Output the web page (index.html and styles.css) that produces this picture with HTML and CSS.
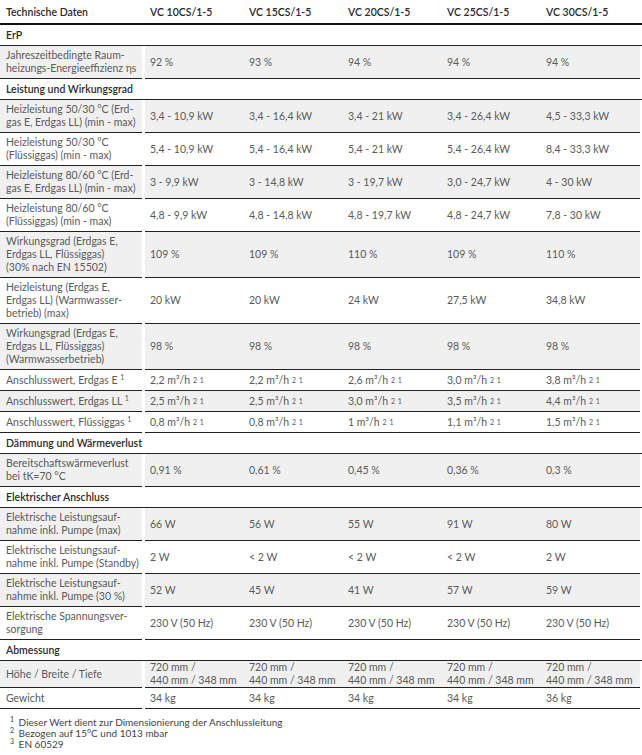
FILE: index.html
```html
<!DOCTYPE html>
<html lang="de">
<head>
<meta charset="utf-8">
<title>Technische Daten</title>
<link rel="stylesheet" href="styles.css">
</head>
<body>
<div class="spec">
  <div class="row head">
    <div class="lab">Technische Daten</div>
    <div class="val">VC 10CS/1-5</div>
    <div class="val">VC 15CS/1-5</div>
    <div class="val">VC 20CS/1-5</div>
    <div class="val">VC 25CS/1-5</div>
    <div class="val">VC 30CS/1-5</div>
  </div>

  <div class="row sec"><div class="lab">ErP</div><div class="fill"></div></div>
  <div class="row two alt">
    <div class="lab">Jahreszeitbedingte Raum-<br>heizungs-Energieeffizienz ηs</div>
    <div class="val">92 %</div><div class="val">93 %</div><div class="val">94 %</div><div class="val">94 %</div><div class="val">94 %</div>
  </div>

  <div class="row sec"><div class="lab">Leistung und Wirkungsgrad</div><div class="fill"></div></div>
  <div class="row two alt">
    <div class="lab">Heizleistung 50/30 °C (Erd-<br>gas E, Erdgas LL) (min - max)</div>
    <div class="val">3,4 - 10,9 kW</div><div class="val">3,4 - 16,4 kW</div><div class="val">3,4 - 21 kW</div><div class="val">3,4 - 26,4 kW</div><div class="val">4,5 - 33,3 kW</div>
  </div>
  <div class="row two">
    <div class="lab">Heizleistung 50/30 °C<br>(Flüssiggas) (min - max)</div>
    <div class="val">5,4 - 10,9 kW</div><div class="val">5,4 - 16,4 kW</div><div class="val">5,4 - 21 kW</div><div class="val">5,4 - 26,4 kW</div><div class="val">8,4 - 33,3 kW</div>
  </div>
  <div class="row two alt">
    <div class="lab">Heizleistung 80/60 °C (Erd-<br>gas E, Erdgas LL) (min - max)</div>
    <div class="val">3 - 9,9 kW</div><div class="val">3 - 14,8 kW</div><div class="val">3 - 19,7 kW</div><div class="val">3,0 - 24,7 kW</div><div class="val">4 - 30 kW</div>
  </div>
  <div class="row two">
    <div class="lab">Heizleistung 80/60 °C<br>(Flüssiggas) (min - max)</div>
    <div class="val">4,8 - 9,9 kW</div><div class="val">4,8 - 14,8 kW</div><div class="val">4,8 - 19,7 kW</div><div class="val">4,8 - 24,7 kW</div><div class="val">7,8 - 30 kW</div>
  </div>
  <div class="row alt">
    <div class="lab">Wirkungsgrad (Erdgas E,<br>Erdgas LL, Flüssiggas)<br>(30% nach EN 15502)</div>
    <div class="val">109 %</div><div class="val">109 %</div><div class="val">110 %</div><div class="val">109 %</div><div class="val">110 %</div>
  </div>
  <div class="row">
    <div class="lab">Heizleistung (Erdgas E,<br>Erdgas LL) (Warmwasser-<br>betrieb) (max)</div>
    <div class="val">20 kW</div><div class="val">20 kW</div><div class="val">24 kW</div><div class="val">27,5 kW</div><div class="val">34,8 kW</div>
  </div>
  <div class="row alt">
    <div class="lab">Wirkungsgrad (Erdgas E,<br>Erdgas LL, Flüssiggas)<br>(Warmwasserbetrieb)</div>
    <div class="val">98 %</div><div class="val">98 %</div><div class="val">98 %</div><div class="val">98 %</div><div class="val">98 %</div>
  </div>
  <div class="row one">
    <div class="lab">Anschlusswert, Erdgas E <sup>1</sup></div>
    <div class="val">2,2 m³/h <sup>2 1</sup></div><div class="val">2,2 m³/h <sup>2 1</sup></div><div class="val">2,6 m³/h <sup>2 1</sup></div><div class="val">3,0 m³/h <sup>2 1</sup></div><div class="val">3,8 m³/h <sup>2 1</sup></div>
  </div>
  <div class="row one alt">
    <div class="lab">Anschlusswert, Erdgas LL <sup>1</sup></div>
    <div class="val">2,5 m³/h <sup>2 1</sup></div><div class="val">2,5 m³/h <sup>2 1</sup></div><div class="val">3,0 m³/h <sup>2 1</sup></div><div class="val">3,5 m³/h <sup>2 1</sup></div><div class="val">4,4 m³/h <sup>2 1</sup></div>
  </div>
  <div class="row one">
    <div class="lab">Anschlusswert, Flüssiggas <sup>1</sup></div>
    <div class="val">0,8 m³/h <sup>2 1</sup></div><div class="val">0,8 m³/h <sup>2 1</sup></div><div class="val">1 m³/h <sup>2 1</sup></div><div class="val">1,1 m³/h <sup>2 1</sup></div><div class="val">1,5 m³/h <sup>2 1</sup></div>
  </div>

  <div class="row sec"><div class="lab">Dämmung und Wärmeverlust</div><div class="fill"></div></div>
  <div class="row two alt">
    <div class="lab">Bereitschaftswärmeverlust<br>bei tK=70 °C</div>
    <div class="val">0,91 %</div><div class="val">0,61 %</div><div class="val">0,45 %</div><div class="val">0,36 %</div><div class="val">0,3 %</div>
  </div>

  <div class="row sec"><div class="lab">Elektrischer Anschluss</div><div class="fill"></div></div>
  <div class="row two alt">
    <div class="lab">Elektrische Leistungsauf-<br>nahme inkl. Pumpe (max)</div>
    <div class="val">66 W</div><div class="val">56 W</div><div class="val">55 W</div><div class="val">91 W</div><div class="val">80 W</div>
  </div>
  <div class="row two">
    <div class="lab">Elektrische Leistungsauf-<br>nahme inkl. Pumpe (Standby)</div>
    <div class="val">2 W</div><div class="val">&lt; 2 W</div><div class="val">&lt; 2 W</div><div class="val">&lt; 2 W</div><div class="val">2 W</div>
  </div>
  <div class="row two alt">
    <div class="lab">Elektrische Leistungsauf-<br>nahme inkl. Pumpe (30 %)</div>
    <div class="val">52 W</div><div class="val">45 W</div><div class="val">41 W</div><div class="val">57 W</div><div class="val">59 W</div>
  </div>
  <div class="row two">
    <div class="lab">Elektrische Spannungsver-<br>sorgung</div>
    <div class="val">230 V (50 Hz)</div><div class="val">230 V (50 Hz)</div><div class="val">230 V (50 Hz)</div><div class="val">230 V (50 Hz)</div><div class="val">230 V (50 Hz)</div>
  </div>

  <div class="row sec"><div class="lab">Abmessung</div><div class="fill"></div></div>
  <div class="row two alt">
    <div class="lab mid">Höhe / Breite / Tiefe</div>
    <div class="val">720 mm /<br>440 mm / 348 mm</div><div class="val">720 mm /<br>440 mm / 348 mm</div><div class="val">720 mm /<br>440 mm / 348 mm</div><div class="val">720 mm /<br>440 mm / 348 mm</div><div class="val">720 mm /<br>440 mm / 348 mm</div>
  </div>
  <div class="row one">
    <div class="lab">Gewicht</div>
    <div class="val">34 kg</div><div class="val">34 kg</div><div class="val">34 kg</div><div class="val">34 kg</div><div class="val">36 kg</div>
  </div>
</div>

<ol class="notes">
  <li><sup>1</sup> Dieser Wert dient zur Dimensionierung der Anschlussleitung</li>
  <li><sup>2</sup> Bezogen auf 15°C und 1013 mbar</li>
  <li><sup>3</sup> EN 60529</li>
</ol>
</body>
</html>
```

FILE: styles.css
```css
html, body {
  margin: 0;
  padding: 0;
  background: #fff;
}

body {
  font-family: Lato, "Open Sans", sans-serif;
  font-size: 10.5px;
  color: #5a5a5a;
}

.spec {
  width: 642px;
  display: flex;
  flex-direction: column;
}

.row {
  display: flex;
  align-items: stretch;
}

.lab {
  flex: 0 0 136px;
  min-width: 0;
  margin-right: 3px;
  padding: 3px 0 3px 6px;
  line-height: 13px;
  border-bottom: 1px solid #222;
  white-space: nowrap;
}

.val {
  flex: 0 0 94px;
  min-width: 0;
  padding-left: 5px;
  line-height: 13px;
  border-bottom: 1px solid #222;
  white-space: nowrap;
  display: flex;
  align-items: center;
}

.lab.mid {
  display: flex;
  align-items: center;
}

.alt .lab,
.alt .val {
  background: #f0f0f0;
}

.one .lab {
  padding-top: 4px;
  padding-bottom: 3px;
}

.head {
  border-bottom: 2px solid #111;
}

.head .lab,
.head .val {
  border-bottom: 0;
  color: #2a2a2a;
  font-weight: 600;
  padding-top: 6px;
  padding-bottom: 4px;
  background: #fff;
}

.sec .lab {
  color: #2a2a2a;
  font-weight: 600;
  padding-top: 4px;
  padding-bottom: 3px;
  flex: 0 0 300px;
  margin-right: 0;
}

.sec .fill {
  flex: 1 1 auto;
  border-bottom: 1px solid #222;
}

sup {
  font-size: 7px;
  line-height: 0;
  vertical-align: 4px;
}

.val sup {
  margin-left: 3px;
  word-spacing: 1px;
}

.notes {
  list-style: none;
  margin: 8px 0 0;
  padding: 0 0 0 10px;
  font-size: 10px;
  line-height: 11px;
  color: #444;
}

.notes sup {
  font-size: 7px;
  margin-right: 2px;
}
```
